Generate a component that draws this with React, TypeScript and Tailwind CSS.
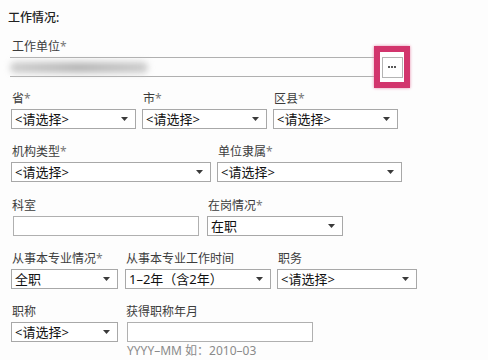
import React from 'react';

const font = { fontFamily: '"Noto Sans", "Noto Sans CJK SC", sans-serif' };

// small dark triangle used by every select
const Arrow = () => (
  <svg width="7" height="4" viewBox="0 0 7 4" className="shrink-0">
    <path d="M0 0 H7 L3.5 4 Z" fill="#3a3a3a" />
  </svg>
);

const Select: React.FC<{ value?: string; w: string }> = ({ value = '<请选择>', w }) => (
  <div
    className={`${w} h-[20px] mt-[2px] border border-[#a8a8a8] bg-white flex items-center justify-between pl-[3px] pr-[7px] text-[13px] leading-none text-[#111]`}
  >
    <span>{value}</span>
    <Arrow />
  </div>
);

const TextBox: React.FC<{ w: string; className?: string }> = ({ w, className = '' }) => (
  <div className={`${w} h-[20px] mt-[2px] border border-[#b0b0b0] bg-white ${className}`} />
);

const Label: React.FC<{ text: string; required?: boolean }> = ({ text, required }) => (
  <div className="h-[16px] leading-[16px] text-[12px] text-[#3c3c3c] pl-[1px]">
    {text}
    {required && <span className="text-[#777]">*</span>}
  </div>
);

export default function App() {
  return (
    <div className="w-[488px] h-[360px] bg-[#fdfdfd] overflow-hidden pl-[11px] pt-[10px]" style={font}>
      <div className="h-[16px] leading-[16px] text-[12px] font-medium text-[#222] -ml-[3px]">工作情况:</div>

      {/* 工作单位 */}
      <div className="mt-[13px]">
        <Label text="工作单位" required />
        <div className="flex items-center mt-[2px] h-[20px]">
          <div className="w-[364px] h-[20px] -ml-[1px] border-y border-[#b0b0b0] flex items-center">
            <div className="w-[138px] h-[11px] rounded-full bg-gradient-to-r from-[#cfcfcf] via-[#b8b8b8] to-[#cdcdcd] blur-[3px]" />
          </div>
          <div className="w-[36px] h-[42px] -my-[11px] border-[6px] border-[#d2356d] shadow-[0_0_3px_#e88aab] bg-white flex items-center justify-center">
            <div className="w-[21px] h-[21px] border border-[#b4b4b4] flex items-center justify-center gap-[1px]">
              <span className="w-[2px] h-[2px] bg-[#222] rounded-full" />
              <span className="w-[2px] h-[2px] bg-[#222] rounded-full" />
              <span className="w-[2px] h-[2px] bg-[#222] rounded-full" />
            </div>
          </div>
        </div>
      </div>

      {/* 省 市 区县 */}
      <div className="mt-[14px] flex gap-[6px]">
        <div>
          <Label text="省" required />
          <Select w="w-[125px]" />
        </div>
        <div>
          <Label text="市" required />
          <Select w="w-[125px]" />
        </div>
        <div>
          <Label text="区县" required />
          <Select w="w-[125px]" />
        </div>
      </div>

      {/* 机构类型 单位隶属 */}
      <div className="mt-[15px] flex gap-[6px]">
        <div>
          <Label text="机构类型" required />
          <Select w="w-[200px]" />
        </div>
        <div>
          <Label text="单位隶属" required />
          <Select w="w-[185px]" />
        </div>
      </div>

      {/* 科室 在岗情况 */}
      <div className="mt-[16px] flex">
        <div className="w-[196px]">
          <Label text="科室" />
          <TextBox w="w-[186px]" className="ml-[2px]" />
        </div>
        <div>
          <Label text="在岗情况" required />
          <Select w="w-[136px]" value="在职" />
        </div>
      </div>

      {/* 从事本专业 */}
      <div className="mt-[15px] flex">
        <div className="w-[114px]">
          <Label text="从事本专业情况" required />
          <Select w="w-[107px]" value="全职" />
        </div>
        <div className="w-[152px]">
          <Label text="从事本专业工作时间" />
          <Select w="w-[146px]" value="1–2年（含2年）" />
        </div>
        <div>
          <Label text="职务" />
          <Select w="w-[140px]" />
        </div>
      </div>

      {/* 职称 */}
      <div className="mt-[15px] flex">
        <div className="w-[114px]">
          <Label text="职称" />
          <Select w="w-[107px]" />
        </div>
        <div>
          <Label text="获得职称年月" />
          <TextBox w="w-[186px]" className="ml-[2px]" />
          <div className="mt-[2px] ml-[2px] text-[12px] leading-[14px] text-[#8a8a8a]">YYYY–MM 如：2010–03</div>
        </div>
      </div>
    </div>
  );
}
